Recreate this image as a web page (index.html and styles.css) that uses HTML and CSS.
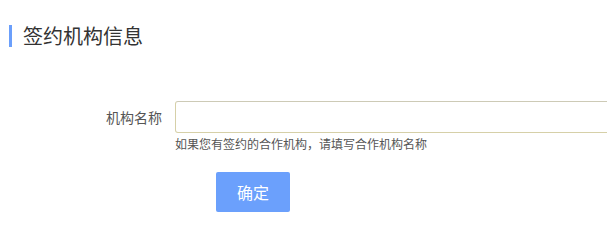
FILE: index.html
```html
<!DOCTYPE html>
<html lang="zh-CN">
<head>
<meta charset="utf-8">
<title>签约机构信息</title>
<link rel="stylesheet" href="styles.css">
</head>
<body>
<div class="page">
  <h2 class="section-title">签约机构信息</h2>
  <form class="form">
    <div class="form-row">
      <label class="form-label" for="org">机构名称</label>
      <div class="form-field">
        <input class="form-input" id="org" type="text">
        <div class="form-help">如果您有签约的合作机构，请填写合作机构名称</div>
      </div>
    </div>
    <div class="form-actions">
      <button class="btn-primary" type="button">确定</button>
    </div>
  </form>
</div>
</body>
</html>
```

FILE: styles.css
```css
html, body {
  margin: 0;
  padding: 0;
  background: #ffffff;
  overflow: hidden;
}
body {
  font-family: "Noto Sans CJK SC", "Noto Sans", sans-serif;
  color: #333333;
}
.page {
  padding-top: 25px;
}
.section-title {
  margin: 0 0 0 9px;
  padding-left: 11px;
  border-left: 3px solid #6b9ffb;
  font-size: 20px;
  line-height: 22px;
  font-weight: normal;
  color: #333333;
}
.form {
  margin-top: 54px;
}
.form-row {
  display: grid;
  grid-template-columns: 162px 460px;
  column-gap: 13px;
  align-items: start;
}
.form-label {
  text-align: right;
  font-size: 14px;
  line-height: 32px;
  color: #555555;
}
.form-field {
  display: flex;
  flex-direction: column;
}
.form-input {
  box-sizing: border-box;
  width: 460px;
  height: 32px;
  margin: 0;
  padding: 0 8px;
  border: 1px solid #d6d0a8;
  border-top-color: #cdcab6;
  border-radius: 3px;
  background: #ffffff;
  font-family: inherit;
  font-size: 14px;
  outline: none;
}
.form-help {
  margin-top: 3px;
  font-size: 12px;
  line-height: 16px;
  color: #555555;
}
.form-actions {
  margin-top: 20px;
  padding-left: 216px;
}
.btn-primary {
  width: 74px;
  height: 40px;
  border: none;
  border-radius: 2px;
  background: #6ba0fc;
  color: #ffffff;
  font-family: inherit;
  font-size: 16px;
  padding: 0;
  cursor: pointer;
}
```
